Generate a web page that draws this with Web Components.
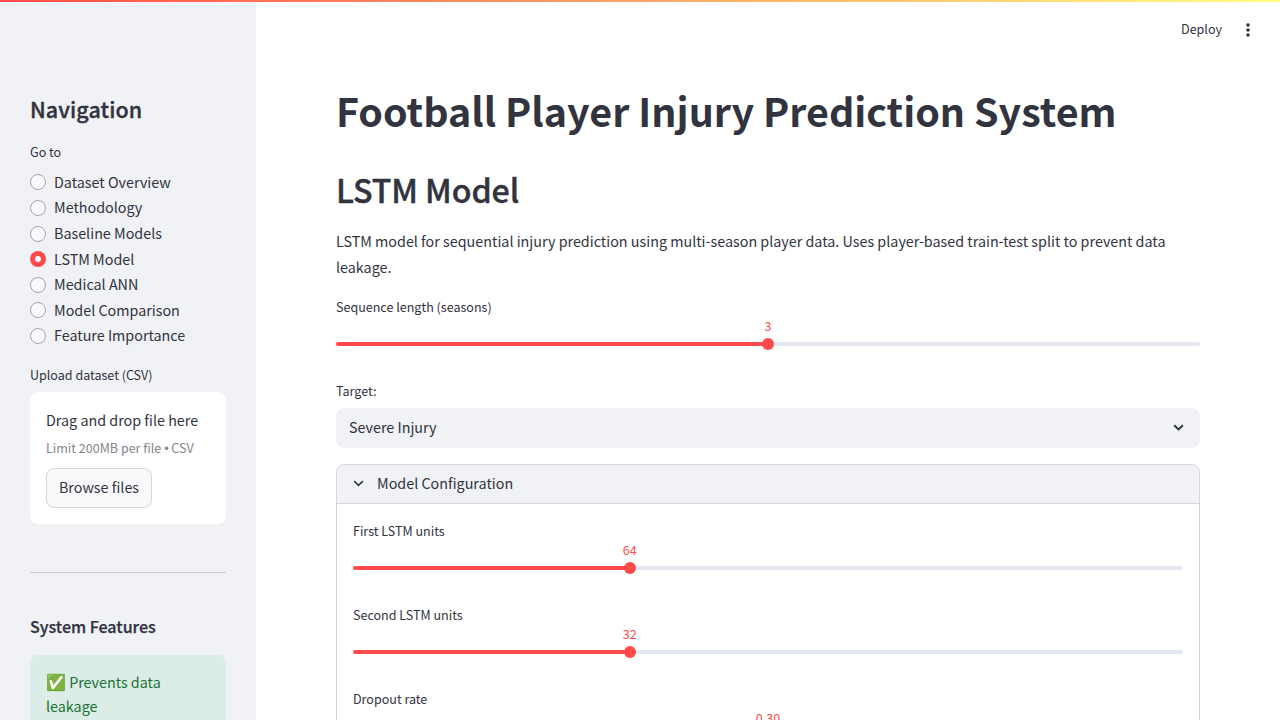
<!DOCTYPE html>
<html lang="en">
<head>
<meta charset="utf-8">
<title>Football Player Injury Prediction System</title>
<style>
html, body { margin: 0; height: 100%; overflow: hidden; background: #fff; }
body {
  --ink: #31333f; --primary: #ff4b4b; --panel: #f0f2f6; --line: #d6d6d9; --track: #e4e9f0;
  --fs: 14.33px; --fs-small: 12.54px;
  color: var(--ink);
  font-family: "Noto Sans CJK SC", "Noto Sans", sans-serif;
  font-size: var(--fs);
  line-height: 25.6px;
}
text-block + range-slider { margin-top: 17.8px; }
</style>
</head>
<body>
<app-shell>
  <side-bar slot="side">
    <head-line size="nav">Navigation</head-line>
    <radio-group label="Go to">
      <radio-item>Dataset Overview</radio-item>
      <radio-item>Methodology</radio-item>
      <radio-item>Baseline Models</radio-item>
      <radio-item checked>LSTM Model</radio-item>
      <radio-item>Medical ANN</radio-item>
      <radio-item>Model Comparison</radio-item>
      <radio-item>Feature Importance</radio-item>
    </radio-group>
    <file-uploader label="Upload dataset (CSV)" hint="Limit 200MB per file • CSV">Drag and drop file here</file-uploader>
    <side-rule></side-rule>
    <head-line size="features">System Features</head-line>
    <success-note>Prevents data leakage</success-note>
  </side-bar>
  <tool-bar slot="tools">Deploy</tool-bar>
  <head-line size="title">Football Player Injury Prediction System</head-line>
  <head-line size="section">LSTM Model</head-line>
  <text-block>LSTM model for sequential injury prediction using multi-season player data. Uses player-based train-test split to prevent data leakage.</text-block>
  <range-slider label="Sequence length (seasons)" value="3" at="50"></range-slider>
  <select-box label="Target:">Severe Injury</select-box>
  <expander-panel label="Model Configuration">
    <range-slider label="First LSTM units" value="64" at="33.333"></range-slider>
    <range-slider label="Second LSTM units" value="32" at="33.333"></range-slider>
    <range-slider label="Dropout rate" value="0.30" at="50"></range-slider>
  </expander-panel>
</app-shell>
<script>
const define = (name, view) => customElements.define(name, class extends HTMLElement {
  connectedCallback() {
    if (this.shadowRoot) return;
    this.attachShadow({ mode: 'open' }).innerHTML = view(this);
  }
});

define('app-shell', () => `
<style>
:host { display: grid; grid-template-columns: 256px 1fr; height: 720px; overflow: hidden; position: relative; background: #fff; }
.stripe { position: absolute; inset: 0 0 auto 0; height: 2px; background: linear-gradient(90deg, #ff4b4b, #fffd80); }
.main { display: flex; flex-direction: column; min-width: 0; }
.page { padding: 24px 80px 0; }
</style>
<slot name="side"></slot>
<div class="main"><slot name="tools"></slot><div class="page"><slot></slot></div></div>
<div class="stripe"></div>`);

define('side-bar', () => `
<style>:host { display: block; height: 720px; box-sizing: border-box; overflow: hidden; background: var(--panel); padding: 93px 30px 0; }</style>
<slot></slot>`);

define('tool-bar', () => `
<style>
:host { display: flex; height: 60px; box-sizing: border-box; align-items: center; justify-content: flex-end; gap: 22px; padding-right: 28px; font-size: var(--fs-small); line-height: 20px; }
svg { display: block; width: 8px; height: 16px; }
.t { margin-top: -2px; }
</style>
<span class="t"><slot></slot></span>
<svg viewBox="0 0 8 16" fill="#31333f"><circle cx="4" cy="3" r="1.8"/><circle cx="4" cy="8" r="1.8"/><circle cx="4" cy="13" r="1.8"/></svg>`);

define('head-line', () => `
<style>
:host { display: block; white-space: nowrap; }
:host([size=title]) { font-size: 39.42px; font-weight: 700; line-height: 52px; }
:host([size=section]) { font-size: 32.2px; font-weight: 500; line-height: 44px; margin-top: 31px; letter-spacing: -.1px; -webkit-text-stroke: .4px; }
:host([size=nav]) { font-size: 21.5px; font-weight: 500; line-height: 32px; letter-spacing: .08px; -webkit-text-stroke: .35px; }
:host([size=features]) { font-size: 16.1px; font-weight: 500; line-height: 24px; letter-spacing: -.03px; -webkit-text-stroke: .25px; }
</style>
<slot></slot>`);

define('text-block', () => `
<style>:host { display: block; margin-top: 17px; line-height: 25.6px; }</style>
<slot></slot>`);

define('field-label', () => `
<style>:host { display: block; font-size: var(--fs-small); line-height: 20px; white-space: nowrap; }</style>
<slot></slot>`);

define('radio-group', el => `
<style>
:host { display: block; margin-top: 17px; }
.list { display: flex; flex-direction: column; margin-top: 7.55px; }
</style>
<field-label>${el.getAttribute('label')}</field-label>
<div class="list"><slot></slot></div>`);

define('radio-item', () => `
<style>
:host { display: flex; align-items: center; gap: 8px; height: 25.6px; line-height: 25.6px; white-space: nowrap; }
i { box-sizing: border-box; width: 16px; height: 16px; border-radius: 50%; border: 1px solid #a3a5ad; background: #f9f9fb; }
:host([checked]) i { border: 5px solid var(--primary); background: #fff; }
span { padding-bottom: 1.5px; }
</style>
<i></i><span><slot></slot></span>`);

define('file-uploader', el => `
<style>
:host { display: block; margin-top: 16.25px; }
.drop { box-sizing: border-box; height: 132px; margin-top: 7px; padding: 16px; border-radius: 8px; background: #fff; white-space: nowrap; display: flex; flex-direction: column; align-items: flex-start; }
.name { line-height: 24px; height: 28px; }
.hint { font-size: var(--fs-small); line-height: 20px; height: 32px; margin: 2px 0 -2px; color: #83858c; }
.hint span { font-family: "Liberation Sans", sans-serif; line-height: 1; }
button { box-sizing: border-box; height: 40px; width: 106px; padding: 0 0 2px; border: 1px solid var(--line); border-radius: 8px; background: #f9f9fb; color: inherit; font: inherit; line-height: 36px; }
</style>
<field-label>${el.getAttribute('label')}</field-label>
<div class="drop"><div class="name"><slot></slot></div><div class="hint">${el.getAttribute('hint').replace('•', '<span>•</span>')}</div><button>Browse files</button></div>`);

define('side-rule', () => `<style>:host { display: block; height: 1px; margin: 48px 0 41px; background: #cbcdd2; }</style>`);

define('success-note', () => `
<style>
:host { display: block; margin-top: 17px; padding: 15px 16px; height: 110px; box-sizing: border-box; border-radius: 8px; background: #dbede6; color: #177233; line-height: 24px; }
b { font: 16px "Noto Color Emoji"; line-height: 1; }
</style>
<b>✅</b> <slot></slot>`);

define('range-slider', el => `
<style>
:host { display: block; height: 84px; }
.value { position: relative; height: 18px; margin-top: -1px; line-height: 20px; font-size: var(--fs-small); color: var(--primary); }
.value span { position: absolute; left: var(--at); transform: translateX(-50%); }
.bar { position: relative; height: 4px; margin-top: 8px; border-radius: 4px; background: linear-gradient(90deg, var(--primary) var(--at), var(--track) var(--at)); }
.bar i { position: absolute; left: var(--at); top: -4px; width: 12px; height: 12px; margin-left: -6px; border-radius: 50%; background: var(--primary); }
</style>
<div style="--at:${el.getAttribute('at')}%">
<field-label>${el.getAttribute('label')}</field-label>
<div class="value"><span>${el.getAttribute('value')}</span></div>
<div class="bar"><i></i></div></div>`);

define('select-box', el => `
<style>
:host { display: block; }
.box { display: flex; align-items: center; justify-content: space-between; box-sizing: border-box; height: 40px; margin-top: 7px; padding: 0 16px 0 13px; border-radius: 8px; background: var(--panel); }
span { padding-bottom: 2.4px; }
svg { width: 11px; height: 7px; display: block; }
</style>
<field-label>${el.getAttribute('label')}</field-label>
<div class="box"><span><slot></slot></span><svg viewBox="0 0 11 7"><path d="M1.2 1.3 5.5 5.4 9.8 1.3" fill="none" stroke="currentColor" stroke-width="2"/></svg></div>`);

define('expander-panel', el => `
<style>
:host { display: block; box-sizing: border-box; height: 400px; margin-top: 16px; border: 1px solid var(--line); border-radius: 8px; overflow: hidden; }
.head { display: flex; align-items: center; gap: 13px; height: 38px; padding-left: 16px; background: var(--panel); border-bottom: 1px solid var(--line); }
.head span { padding-bottom: 2px; }
svg { width: 11px; height: 7px; display: block; }
.body { padding: 17px 16px 0; }
</style>
<div class="head"><svg viewBox="0 0 11 7"><path d="M1.2 1.2 5.5 5.3 9.8 1.2" fill="none" stroke="currentColor" stroke-width="1.6"/></svg><span>${el.getAttribute('label')}</span></div>
<div class="body"><slot></slot></div>`);
</script>
</body>
</html>
